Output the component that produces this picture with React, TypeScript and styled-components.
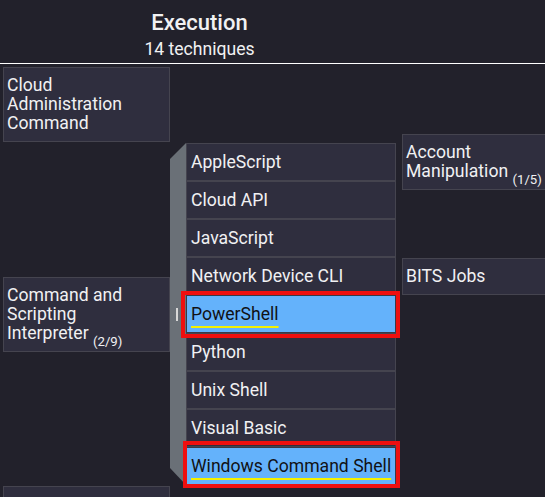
import React from "react";
import styled, { createGlobalStyle, css } from "styled-components";

const GlobalStyle = createGlobalStyle`
  html, body {
    margin: 0;
    padding: 0;
    background: #22212b;
    overflow: hidden;
  }
  body {
    font-family: Roboto, "Noto Sans", "Liberation Sans", sans-serif;
    color: #f1f1f3;
  }
`;

const Page = styled.div`
  width: 545px;
  height: 497px;
  overflow: hidden;
  background: #22212b;
`;

const Header = styled.header`
  height: 63px;
  border-bottom: 1px solid #ffffff;
  box-sizing: content-box;
  padding-left: 3px;
`;

const TacticHeader = styled.div`
  width: 393px;
  padding-top: 10px;
  text-align: center;
`;

const Title = styled.div`
  font-size: 22px;
  font-weight: 500;
  line-height: 26px;
`;

const Count = styled.div`
  margin-top: 3px;
  font-size: 17.6px;
  line-height: 20px;
`;

const Matrix = styled.div`
  display: flex;
  align-items: flex-start;
  gap: 6px;
  padding: 3px 0 0 3px;
`;

const Column = styled.div`
  display: flex;
  flex-direction: column;
  gap: 1px;
  flex: none;
`;

const TechRow = styled.div<{ $height?: number }>`
  display: flex;
  align-items: center;
  ${(p) =>
    p.$height &&
    css`
      height: ${p.$height}px;
    `}
`;

const TechCell = styled.div`
  box-sizing: border-box;
  width: 167px;
  flex: none;
  padding: 8px 10px 8px 3px;
  border: 1px solid #45444f;
  background: #2f2e3e;
  font-size: 17.6px;
  line-height: 19px;
`;

const SubCount = styled.span`
  font-size: 13.2px;
  line-height: 0;
  vertical-align: -7px;
`;

const SubSidebar = styled.div`
  width: 16px;
  align-self: stretch;
  flex: none;
  background: #6a7077;
  clip-path: polygon(0 16px, 100% 0, 100% 100%, 0 calc(100% - 17px));
  display: flex;
  align-items: center;
  justify-content: center;
`;

const Caret = styled.span`
  width: 2px;
  height: 13px;
  margin-right: 2px;
  background: #d8d8d8;
`;

const SubList = styled.div`
  display: flex;
  flex-direction: column;
  width: 210px;
  flex: none;
`;

type Mark = { l: number; t: number; r: number; b: number };

const SubCell = styled.div<{ $selected?: boolean; $mark?: Mark }>`
  box-sizing: border-box;
  height: 38px;
  display: flex;
  align-items: center;
  padding: 0 4px;
  border: 1px solid #45444f;
  background: #2f2e3e;
  font-size: 17.6px;
  line-height: 19px;
  white-space: nowrap;
  ${(p) =>
    p.$selected &&
    css`
      background: #64b2fb;
      color: #111114;
      border-color: #3a3946;
    `}
  ${(p) =>
    p.$mark &&
    css`
      position: relative;
      z-index: 1;
      &::after {
        content: "";
        position: absolute;
        left: ${p.$mark.l}px;
        top: ${p.$mark.t}px;
        right: ${p.$mark.r}px;
        bottom: ${p.$mark.b}px;
        border: 4px solid #ee0f0f;
        pointer-events: none;
      }
    `}
`;

const Highlight = styled.span`
  text-decoration: underline;
  text-decoration-color: #f4f000;
  text-decoration-thickness: 2px;
  text-underline-offset: 6px;
`;

type Sub = { name: string; selected?: boolean; mark?: Mark };

const subs: Sub[] = [
  { name: "AppleScript" },
  { name: "Cloud API" },
  { name: "JavaScript" },
  { name: "Network Device CLI" },
  { name: "PowerShell", selected: true, mark: { l: -6, t: -5, r: -5, b: -6 } },
  { name: "Python" },
  { name: "Unix Shell" },
  { name: "Visual Basic" },
  {
    name: "Windows Command Shell",
    selected: true,
    mark: { l: -4, t: -7, r: -5, b: -4 },
  },
];

export default function App() {
  return (
    <Page>
      <GlobalStyle />
      <Header>
        <TacticHeader>
          <Title>Execution</Title>
          <Count>14 techniques</Count>
        </TacticHeader>
      </Header>
      <Matrix>
        <Column>
          <TechRow>
            <TechCell>Cloud Administration Command</TechCell>
          </TechRow>
          <TechRow>
            <TechCell>
              Command and Scripting Interpreter <SubCount>(2/9)</SubCount>
            </TechCell>
            <SubSidebar>
              <Caret />
            </SubSidebar>
            <SubList>
              {subs.map((s) => (
                <SubCell key={s.name} $selected={s.selected} $mark={s.mark}>
                  {s.selected ? <Highlight>{s.name}</Highlight> : s.name}
                </SubCell>
              ))}
            </SubList>
          </TechRow>
          <TechRow>
            <TechCell>Container Administration Command</TechCell>
          </TechRow>
        </Column>
        <Column>
          <TechRow $height={190}>
            <TechCell>
              Account Manipulation <SubCount>(1/5)</SubCount>
            </TechCell>
          </TechRow>
          <TechRow>
            <TechCell>BITS Jobs</TechCell>
          </TechRow>
        </Column>
      </Matrix>
    </Page>
  );
}
